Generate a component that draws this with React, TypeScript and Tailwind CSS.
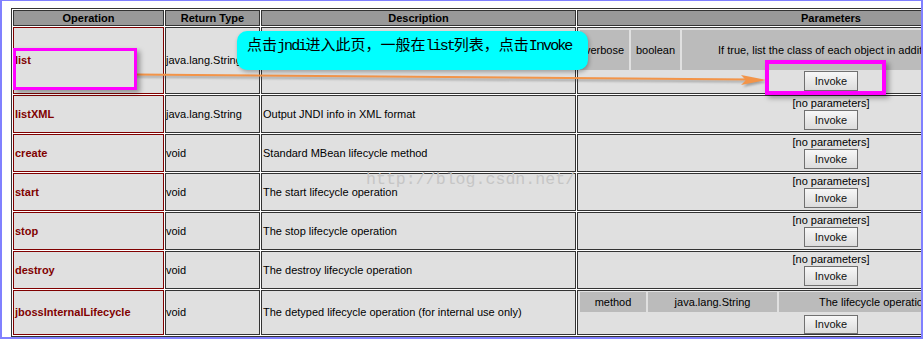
import React from "react";

const rows = [
  { name: "listXML", ret: "java.lang.String", desc: "Output JNDI info in XML format" },
  { name: "create", ret: "void", desc: "Standard MBean lifecycle method" },
  { name: "start", ret: "void", desc: "The start lifecycle operation" },
  { name: "stop", ret: "void", desc: "The stop lifecycle operation" },
  { name: "destroy", ret: "void", desc: "The destroy lifecycle operation" },
];

function InvokeButton({ h = "h-[20px]" }: { h?: string }) {
  return (
    <button
      className={`w-[54px] ${h} border border-[#707070] bg-linear-to-b from-[#f7f7f7] to-[#dcdcdc] text-[11px] leading-none text-[#111] flex items-center justify-center`}
    >
      Invoke
    </button>
  );
}

const head = "border border-[#333] bg-[#999] flex items-center justify-center font-bold text-black";
const opCell = "border border-[#800000] bg-[#e0e0e0] flex items-center pl-px font-bold text-[#800000]";
const cell = "border border-[#333] bg-[#e0e0e0] flex items-center whitespace-nowrap overflow-hidden";

export default function App() {
  return (
    <div className="relative w-[923px] h-[339px] overflow-hidden bg-white border-[#8080ff] border-l-2 border-t border-r-2 border-b-2 pl-[9px] pt-[7px] font-['Liberation_Sans',Arial,sans-serif] text-[11px] leading-[13px] text-black">
      <div className="grid w-max grid-cols-[151px_95px_315px_508px] grid-rows-[16px_67px_38px_38px_38px_38px_38px_45px] gap-px p-px border border-[#333] bg-white">
        <div className={head}>Operation</div>
        <div className={head}>Return Type</div>
        <div className={head}>Description</div>
        <div className={head}>Parameters</div>

        {/* list row */}
        <div className={opCell}>list</div>
        <div className={cell}>java.lang.String</div>
        <div className={`${cell} pl-px`}>Output JNDI info as text</div>
        <div className="border border-[#333] bg-[#e0e0e0] flex flex-col px-[2px] pt-[2px] overflow-hidden">
          <div className="grid grid-cols-[49px_49px_minmax(0,1fr)] gap-[2px] h-[40px]">
            <div className="bg-[#bbbbbb] flex items-center justify-center">verbose</div>
            <div className="bg-[#bbbbbb] flex items-center justify-center">boolean</div>
            <div className="bg-[#bbbbbb] flex items-center pl-[36px] whitespace-nowrap overflow-hidden">
              If true, list the class of each object in addition to its name
            </div>
          </div>
          <div className="flex justify-center mt-px">
            <InvokeButton />
          </div>
        </div>

        {rows.map((r) => (
          <React.Fragment key={r.name}>
            <div className={opCell}>{r.name}</div>
            <div className={cell}>{r.ret}</div>
            <div className={`${cell} pl-px`}>{r.desc}</div>
            <div className="border border-[#333] bg-[#e0e0e0] flex flex-col items-center pt-px">
              <div className="leading-[13px]">[no parameters]</div>
              <InvokeButton />
            </div>
          </React.Fragment>
        ))}

        {/* jbossInternalLifecycle */}
        <div className={opCell}>jbossInternalLifecycle</div>
        <div className={cell}>void</div>
        <div className={`${cell} pl-px`}>The detyped lifecycle operation (for internal use only)</div>
        <div className="border border-[#333] bg-[#e0e0e0] flex flex-col px-[2px] pt-px overflow-hidden">
          <div className="grid grid-cols-[66px_129px_minmax(0,1fr)] gap-[2px] h-[20px]">
            <div className="bg-[#bbbbbb] flex items-center justify-center">method</div>
            <div className="bg-[#bbbbbb] flex items-center justify-center">java.lang.String</div>
            <div className="bg-[#bbbbbb] flex items-center pl-[40px] whitespace-nowrap overflow-hidden">
              The lifecycle operation
            </div>
          </div>
          <div className="flex justify-center mt-[3px]">
            <InvokeButton h="h-[19px]" />
          </div>
        </div>
      </div>

      {/* annotation overlay, page coordinates */}
      <div className="pointer-events-none absolute left-[-2px] top-[-1px] w-[923px] h-[339px]">
        {/* watermark */}
        <div className="absolute left-[366px] top-[172px] font-['Liberation_Mono',monospace] text-[16.6px] leading-[16px] text-[#c6c6c6] whitespace-nowrap">
          http://blog.csdn.net/
        </div>

        {/* arrow */}
        <svg className="absolute left-0 top-0" width="923" height="339" viewBox="0 0 923 339">
          <defs>
            <filter id="blur" x="-10%" y="-200%" width="120%" height="500%">
              <feGaussianBlur stdDeviation="1.2" />
            </filter>
          </defs>
          <g filter="url(#blur)" opacity="0.45">
            <line x1="136" y1="76.5" x2="750" y2="81.6" stroke="#555" strokeWidth="2" />
            <polygon points="767,82 743,77 748,82 743,87" fill="#555" />
          </g>
          <line x1="134" y1="74.5" x2="748" y2="79.6" stroke="#f39448" strokeWidth="2" />
          <polygon points="766,80 741,75 746,80 741,85" fill="#f39448" />
        </svg>

        {/* magenta highlight boxes */}
        <div className="absolute left-[13px] top-[48px] w-[124px] h-[42px] border-[3px] border-[#ff00ff] shadow-[3px_3px_5px_rgba(0,0,0,0.35)]" />
        <div className="absolute left-[765px] top-[60px] w-[121px] h-[35px] border-4 border-[#ff00ff] shadow-[3px_3px_5px_rgba(0,0,0,0.35)]" />

        {/* callout */}
        <div className="absolute left-[237px] top-[31px] w-[351px] h-[39px] rounded-[10px] bg-[#00ffff] pl-[10px] pt-[6px] shadow-[1px_2px_4px_rgba(0,0,0,0.3)] whitespace-nowrap font-['Liberation_Mono','Noto_Sans_CJK_SC',monospace] text-[15px] leading-[20px] text-black">
          点击<span className="tracking-[-1.9px]">jndi</span>进入此页，一般在<span className="tracking-[-1.9px]">list</span>列表，点击<span className="tracking-[-1.9px]">Invoke</span>
        </div>
      </div>
    </div>
  );
}
